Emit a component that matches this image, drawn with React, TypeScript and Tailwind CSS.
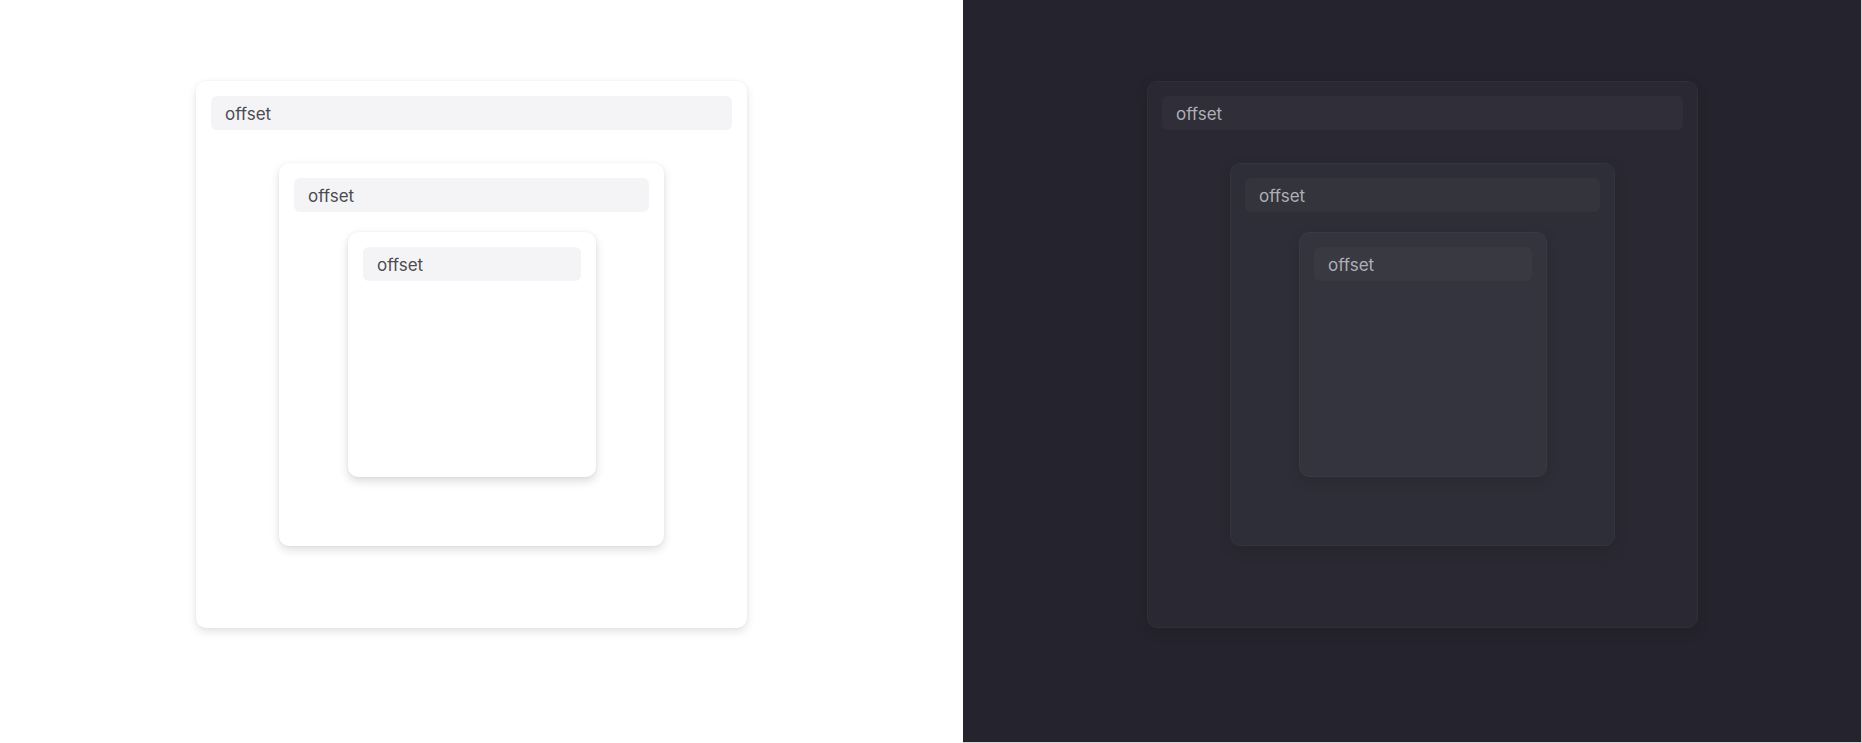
const font = { fontFamily: "Inter, 'Noto Sans', sans-serif" };

function LightPanel() {
  return (
    <div className="w-[963px] h-[743px] shrink-0 bg-white pt-[81px] pl-[196px]">
      {/* outer */}
      <div className="w-[551px] h-[547px] rounded-[10px] bg-white p-[15px] shadow-[0_4px_10px_rgba(0,0,0,0.11),0_0_3px_rgba(0,0,0,0.05)]">
        <div className="h-[34px] rounded-md bg-[#f4f4f6] pl-[14px] pt-[3px] flex items-center text-[17px] text-[#4b4b50]">offset</div>
        {/* middle */}
        <div className="mx-auto mt-[33px] w-[385px] h-[383px] rounded-[10px] bg-white p-[15px] shadow-[0_4px_10px_rgba(0,0,0,0.13),0_0_3px_rgba(0,0,0,0.05)]">
          <div className="h-[34px] rounded-md bg-[#f4f4f6] pl-[14px] pt-[3px] flex items-center text-[17px] text-[#4b4b50]">offset</div>
          {/* inner */}
          <div className="ml-[54px] mt-[20px] w-[248px] h-[245px] rounded-[10px] bg-white p-[15px] shadow-[0_4px_10px_rgba(0,0,0,0.15),0_0_3px_rgba(0,0,0,0.05)]">
            <div className="h-[34px] rounded-md bg-[#f4f4f6] pl-[14px] pt-[3px] flex items-center text-[17px] text-[#4b4b50]">offset</div>
          </div>
        </div>
      </div>
    </div>
  );
}

function DarkPanel() {
  return (
    <div className="w-[898px] h-[742px] shrink-0 bg-[#25232d] pt-[81px] pl-[184px]">
      {/* outer */}
      <div className="w-[551px] h-[547px] rounded-[10px] bg-[#2a2933] border border-[#302f39] p-[14px] shadow-[0_4px_14px_rgba(0,0,0,0.12)]">
        <div className="h-[34px] rounded-md bg-[#302f39] pl-[14px] pt-[3px] flex items-center text-[17px] text-[#aeafb6]">offset</div>
        {/* middle */}
        <div className="mx-auto mt-[33px] w-[385px] h-[383px] rounded-[10px] bg-[#2e2e38] border border-[#34343d] p-[14px] shadow-[0_4px_14px_rgba(0,0,0,0.12)]">
          <div className="h-[34px] rounded-md bg-[#34343d] pl-[14px] pt-[3px] flex items-center text-[17px] text-[#aeafb6]">offset</div>
          {/* inner */}
          <div className="ml-[54px] mt-[20px] w-[248px] h-[245px] rounded-[10px] bg-[#33343d] border border-[#393a42] p-[14px] shadow-[0_4px_14px_rgba(0,0,0,0.12)]">
            <div className="h-[34px] rounded-md bg-[#383941] pl-[14px] pt-[3px] flex items-center text-[17px] text-[#aeafb6]">offset</div>
          </div>
        </div>
      </div>
    </div>
  );
}

export default function App() {
  return (
    <div className="flex w-[1862px] h-[743px] bg-[#d6d6d9] overflow-hidden" style={font}>
      <LightPanel />
      <DarkPanel />
    </div>
  );
}
